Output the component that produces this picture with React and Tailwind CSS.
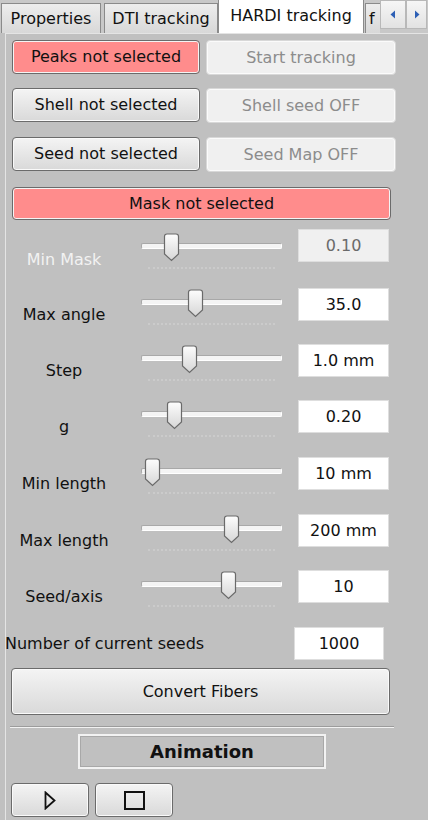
import React from "react"

const font = { fontFamily: '"DejaVu Sans", Tahoma, Verdana, sans-serif' }

const sliders = [
  { label: "Min Mask", value: "0.10", pos: 22, h: "h-[59px]", disabled: true },
  { label: "Max angle", value: "35.0", pos: 46, h: "h-[56px]" },
  { label: "Step", value: "1.0 mm", pos: 40, h: "h-[56px]" },
  { label: "g", value: "0.20", pos: 25, h: "h-[57px]" },
  { label: "Min length", value: "10 mm", pos: 3, h: "h-[57px]" },
  { label: "Max length", value: "200 mm", pos: 82, h: "h-[56px]" },
  { label: "Seed/axis", value: "10", pos: 79, h: "h-[57px]" },
]

function Handle() {
  return (
    <svg width="17" height="29" viewBox="0 0 17 29">
      <defs>
        <linearGradient id="hg" x1="0" y1="0" x2="0" y2="1">
          <stop offset="0" stopColor="#fdfdfd" />
          <stop offset="1" stopColor="#d6d6d6" />
        </linearGradient>
      </defs>
      <path d="M1.5 3.5 Q1.5 1 4 1 H13 Q15.5 1 15.5 3.5 V21 L8.5 27.5 L1.5 21 Z" fill="url(#hg)" stroke="#6a6a6a" strokeWidth="1.2" />
    </svg>
  )
}

function Btn({ children, className = "", variant = "normal" }) {
  const styles = {
    normal: "bg-gradient-to-b from-[#f4f4f4] to-[#d9d9d9] border-[#6b6b6b] text-[#111] shadow-[inset_0_0_0_1px_#fafafa]",
    red: "bg-[#ff8c8c] border-[#6b6b6b] text-[#111] shadow-[inset_0_0_0_1px_#f4f4f4]",
    off: "bg-[#f0f0f0] border-[#d8d8d8] text-[#8c8c8c] shadow-[inset_0_0_0_1px_#fbfbfb]",
  }
  return (
    <div className={`flex items-center justify-center border-[1.5px] rounded-[4px] text-[16px] ${styles[variant]} ${className}`}>
      {children}
    </div>
  )
}

function SliderRow({ s }) {
  return (
    <div className={`flex ${s.h}`}>
      <div className={`w-[116px] pt-[15px] text-center text-[16px] ${s.disabled ? "text-[#f2f2f2] pt-[19px]" : "text-[#111]"}`}>
        {s.label}
      </div>
      <div className={`relative ml-[19px] w-[141px] ${s.disabled ? "pt-[3px]" : ""}`}>
        <div className="mt-[11px] h-[6px] rounded-[2px] bg-[#f4f4f4] border border-[#a8a8a8] border-b-[#ffffff] border-r-[#ffffff]" />
        <div className="mt-[18px] mx-[7px] border-t-2 border-dotted border-[#cbcbcb]" />
        <div className={`absolute ${s.disabled ? "top-[4px]" : "top-[1px]"}`} style={{ left: s.pos }}>
          <Handle />
        </div>
      </div>
      <div
        className={`ml-[16px] w-[91px] h-[33px] flex items-center justify-center border border-[#dedede] text-[16px] ${
          s.disabled ? "bg-[#f0f0f0] text-[#6a6a6a]" : "bg-white text-[#111]"
        }`}
      >
        {s.value}
      </div>
    </div>
  )
}

export default function App() {
  return (
    <div className="w-[428px] h-[820px] bg-[#c0c0c0] overflow-hidden" style={font}>
      {/* tab bar */}
      <div className="flex items-end h-[33px] bg-[#c8c8c8]">
        <div className="ml-[1px] w-[100px] h-[30px] flex items-center justify-center border border-[#8a8a8a] border-b-0 bg-gradient-to-b from-[#ededed] to-[#d8d8d8] text-[16px] text-[#111]">
          Properties
        </div>
        <div className="ml-[3px] w-[114px] h-[30px] flex items-center justify-center border border-[#8a8a8a] border-b-0 bg-gradient-to-b from-[#ededed] to-[#d8d8d8] text-[16px] text-[#111]">
          DTI tracking
        </div>
        <div className="w-[146px] h-[33px] flex items-center justify-center bg-white border-x border-[#8a8a8a] text-[16px] text-[#111] pb-[2px]">
          HARDI tracking
        </div>
        <div className="ml-[1px] w-[15px] h-[30px] flex items-center pl-[3px] overflow-hidden border border-[#8a8a8a] border-b-0 border-r-0 bg-gradient-to-b from-[#ededed] to-[#d8d8d8] text-[16px] text-[#111]">
          f
        </div>
        <div className="self-start flex h-[29px]">
          <div className="w-[26px] h-[29px] flex items-center justify-center border border-[#b8b8b8] bg-gradient-to-b from-[#f6f6f6] to-[#e2e2e2]">
            <svg width="6" height="9" viewBox="0 0 6 9"><path d="M5 0.5 L0.5 4.5 L5 8.5 Z" fill="#2d5fb5" /></svg>
          </div>
          <div className="w-[21px] h-[29px] flex items-center justify-center border border-[#b8b8b8] bg-gradient-to-b from-[#f6f6f6] to-[#e2e2e2]">
            <svg width="6" height="9" viewBox="0 0 6 9"><path d="M1 0.5 L5.5 4.5 L1 8.5 Z" fill="#2d5fb5" /></svg>
          </div>
        </div>
      </div>

      {/* panel */}
      <div className="ml-[5px] h-[787px] border-l border-t border-[#e4e4e4]">
        <div className="flex gap-[6px] ml-[6px] mt-[6px]">
          <Btn variant="red" className="w-[188px] h-[34px]">Peaks not selected</Btn>
          <Btn variant="off" className="w-[190px] h-[35px]">Start tracking</Btn>
        </div>
        <div className="flex gap-[6px] ml-[6px] mt-[13px]">
          <Btn className="w-[188px] h-[34px]">Shell not selected</Btn>
          <Btn variant="off" className="w-[190px] h-[35px]">Shell seed OFF</Btn>
        </div>
        <div className="flex gap-[6px] ml-[6px] mt-[14px]">
          <Btn className="w-[188px] h-[34px]">Seed not selected</Btn>
          <Btn variant="off" className="w-[190px] h-[35px]">Seed Map OFF</Btn>
        </div>
        <Btn variant="red" className="ml-[6px] mt-[15px] w-[379px] h-[33px]">Mask not selected</Btn>

        <div className="mt-[9px]">
          {sliders.map((s, i) => (
            <SliderRow key={i} s={s} />
          ))}
        </div>

        <div className="flex items-center h-[33px]">
          <div className="w-[289px] text-[16px] text-[#111] -ml-[1px]">Number of current seeds</div>
          <div className="w-[90px] h-[33px] flex items-center justify-center bg-white border border-[#dedede] text-[16px] text-[#111]">
            1000
          </div>
        </div>

        <Btn className="ml-[5px] mt-[8px] w-[379px] h-[47px]">Convert Fibers</Btn>

        <div className="ml-[4px] mt-[11px] w-[384px] h-[2px] border-t border-b border-t-[#9c9c9c] border-b-[#f2f2f2]" />

        <div className="ml-[72px] mt-[6px] w-[248px] h-[35px] flex items-center justify-center border-2 border-[#f2f2f2] shadow-[inset_0_0_0_1px_#a8a8a8] text-[18px] font-bold text-[#111]">
          Animation
        </div>

        <div className="flex gap-[6px] ml-[5px] mt-[14px]">
          <Btn className="w-[78px] h-[34px]">
            <svg width="12" height="19" viewBox="0 0 12 19"><path d="M1.5 1.5 L10.5 9.5 L1.5 17.5 Z" fill="none" stroke="#111" strokeWidth="1.8" /></svg>
          </Btn>
          <Btn className="w-[78px] h-[34px]">
            <svg width="21" height="19" viewBox="0 0 21 19"><rect x="1" y="1" width="19" height="17" fill="none" stroke="#111" strokeWidth="2" /></svg>
          </Btn>
        </div>
      </div>
    </div>
  )
}
